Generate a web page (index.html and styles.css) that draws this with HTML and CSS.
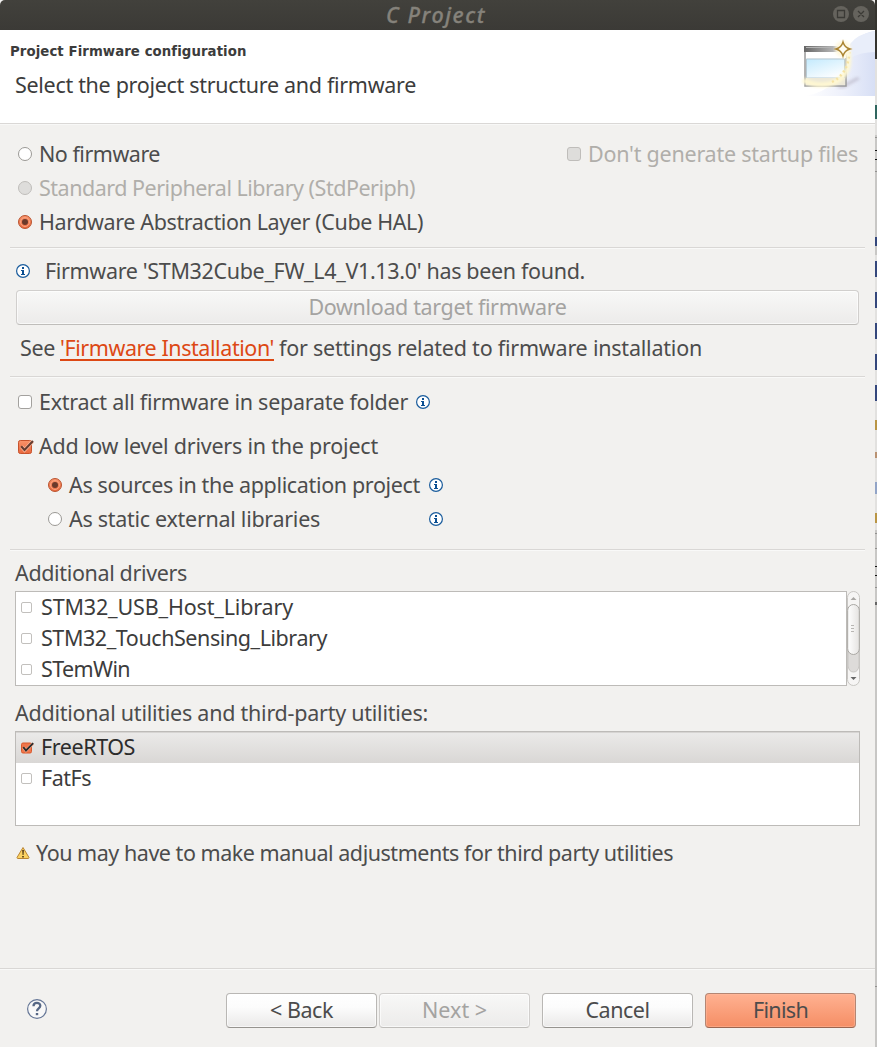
FILE: index.html
```html
<!DOCTYPE html>
<html lang="en">
<head>
<meta charset="utf-8">
<title>C Project</title>
<link rel="stylesheet" href="styles.css">
</head>
<body>
<svg class="defs" width="0" height="0">
  <defs>
    <linearGradient id="orange" x2="0" y2="1"><stop stop-color="#f9936b"/><stop offset="1" stop-color="#e9683c"/></linearGradient>
    <symbol id="info" viewBox="0 0 14 14"><circle cx="7" cy="7" r="6.4" fill="#fff" stroke="#1a5c9c" stroke-width="1.2"/><path d="M6 3h2v2H6zM5 6h3v4h1v1H5v-1h1V7H5z" fill="#0b4f92"/></symbol>
    <symbol id="on" viewBox="0 0 14 14"><circle cx="7" cy="7" r="6.5" fill="url(#orange)" stroke="#b95532"/><circle cx="7" cy="7" r="4.5" fill="none" stroke="#f9a482"/><circle cx="7" cy="7" r="3" fill="#6b3a2b"/></symbol>
    <symbol id="off" viewBox="0 0 14 14"><circle cx="7" cy="7" r="6.5" fill="#fff" stroke="#9a9894"/></symbol>
    <symbol id="check" viewBox="0 0 17 15"><rect x="1.5" y="1.5" width="13" height="13" rx="1.8" fill="url(#orange)" stroke="#c7532d"/><path d="M4.500 7.500 7.500 11 15.500 2.500" fill="none" stroke="#fbb598" stroke-width="3.6"/><path d="M4.200 7.200 7.500 11 16 2" fill="none" stroke="#663c30" stroke-width="2.1"/></symbol>
    <symbol id="check-dark" viewBox="0 0 13 12"><rect x=".5" y="1" width="10" height="10" rx="1.5" fill="#f0764b" stroke="#d9582c"/><path d="M2.500 5.500 5 8.500 12 1.500" fill="none" stroke="#fbb598" stroke-width="3"/><path d="M2.300 5.200 5 8.500 12.200 1.200" fill="none" stroke="#2c2c2c" stroke-width="1.900"/></symbol>
  </defs>
</svg>
<div class="screen">
  <div class="dialog">
    <header class="titlebar">
      <span class="title" data-w="100">C Project</span>
      <svg class="controls" width="38" height="18" viewBox="0 0 38 18"><g fill="#65635d"><circle cx="9" cy="9" r="8"/><circle cx="29" cy="9" r="8"/></g><path d="M5.5 5.5h7v7h-7zM26 6l6 6m0-6-6 6" fill="none" stroke="#3b3a36" stroke-width="1.3"/></svg>
    </header>
    <section class="banner">
      <div class="banner-text">
        <h1><span data-w="236">Project Firmware configuration</span></h1>
        <p><span data-w="401">Select the project structure and firmware</span></p>
      </div>
      <svg class="wizard" width="75" height="66" viewBox="0 0 75 66">
        <defs>
          <linearGradient id="sweep"><stop offset="0" stop-color="#fff"/><stop offset=".55" stop-color="#edf0fb"/><stop offset="1" stop-color="#d7dff5"/></linearGradient>
          <linearGradient id="bar"><stop offset="0" stop-color="#666"/><stop offset="1" stop-color="#d8d8d8"/></linearGradient>
          <linearGradient id="pane" x2=".6" y2="1"><stop offset="0" stop-color="#c3eafd"/><stop offset="1" stop-color="#fbfdff"/></linearGradient>
          <filter id="soft"><feGaussianBlur stdDeviation="1.5"/></filter>
        </defs>
        <path d="M5 66Q42 60 48 22Q55 4 75 1V66H5z" fill="url(#sweep)"/>
        <path d="M50 28Q61 22 75 22V1Q57 4 50 14z" fill="#e9eefa"/>
        <path d="M36 58 57 47 60 49 44 58z" fill="#bcb9ca" filter="url(#soft)" opacity=".7"/>
        <path d="M5 17h41v39H5z" fill="#f4f4f5" stroke="#9a9a9a" stroke-width="1.5"/>
        <path d="M4 16h43v6H4z" fill="url(#bar)"/><path d="M6 17.5h35" stroke="#b4b4b4"/>
        <path d="M6 22h40v6H6z" fill="#fff"/>
        <path d="M6.500 29h38v19h-38z" fill="url(#pane)" stroke="#a9bfca" stroke-width=".8"/>
        <path d="M6 48h39v7H6z" fill="#ece8d8"/>
        <path d="M3 50C15 57 32 56 40 49C48 43 50 34 48 22" fill="none" stroke="#fff8d2" stroke-width="5" filter="url(#soft)"/>
        <path d="M32 52Q48 44 49.500 22" fill="none" stroke="#f6e3a4" stroke-width="2.500" stroke-dasharray="2 3"/>
        <circle cx="43" cy="19" r="8" fill="#fff8de" filter="url(#soft)"/>
        <path d="M43 12Q44.500 17.500 50 19Q44.500 20.500 43 26Q41.500 20.500 36 19Q41.500 17.500 43 12z" fill="#fffdf3" stroke="#ab8432" stroke-width="1.400"/>
      </svg>
    </section>
    <main class="content">
      <div class="row r34">
        <svg class="radio"><use href="#off"/></svg><span data-w="121">No firmware</span>
        <i class="box disabled startup"></i><span class="muted" data-w="270">Don't generate startup files</span>
      </div>
      <div class="row r34 muted"><i class="box round disabled"></i><span data-w="376">Standard Peripheral Library (StdPeriph)</span></div>
      <div class="row r34"><svg class="radio"><use href="#on"/></svg><span data-w="384">Hardware Abstraction Layer (Cube HAL)</span></div>
      <hr class="gap8">
      <div class="row found"><svg class="info"><use href="#info"/></svg><span data-w="540">Firmware 'STM32Cube_FW_L4_V1.13.0' has been found.</span></div>
      <button class="btn wide" disabled><span data-w="258">Download target firmware</span></button>
      <div class="row see"><span data-w="35">See</span><a href="#" data-w="214">'Firmware Installation'</a><span data-w="423">for settings related to firmware installation</span></div>
      <hr class="gap5">
      <div class="row r48"><i class="box"></i><span data-w="369">Extract all firmware in separate folder</span><svg class="info after"><use href="#info"/></svg></div>
      <div class="row r40"><svg class="check"><use href="#check"/></svg><span data-w="339">Add low level drivers in the project</span></div>
      <div class="row r38 sub"><svg class="radio"><use href="#on"/></svg><span class="choice"><span data-w="351">As sources in the application project</span></span><svg class="info"><use href="#info"/></svg></div>
      <div class="row r30 sub"><svg class="radio"><use href="#off"/></svg><span class="choice"><span data-w="251">As static external libraries</span></span><svg class="info"><use href="#info"/></svg></div>
      <hr class="gap15">
      <div class="label drivers"><span data-w="172">Additional drivers</span></div>
      <div class="listing">
        <ul class="list">
          <li><i class="box small"></i><span data-w="252">STM32_USB_Host_Library</span></li>
          <li><i class="box small"></i><span data-w="286">STM32_TouchSensing_Library</span></li>
          <li><i class="box small"></i><span data-w="89">STemWin</span></li>
        </ul>
        <svg class="scroll" width="13" height="95" viewBox="0 0 13 95">
          <defs><linearGradient id="thumb"><stop stop-color="#fff"/><stop offset="1" stop-color="#e5e3e1"/></linearGradient></defs>
          <rect x=".5" y=".5" width="12" height="94" rx="6" fill="#f6f5f4" stroke="#c8c6c3"/>
          <path d="M1 50h11v25q-1 6-5.500 6T1 75z" fill="#dddbd9" stroke="#c8c6c3"/>
          <rect x=".7" y="13.500" width="11.600" height="50" rx="5.800" fill="url(#thumb)" stroke="#aaa8a4"/>
          <path d="M4 34.500h3M4 37.500h3M4 40.500h3" stroke="#b8b6b3"/>
          <path d="M3.500 9 6.500 6 9.500 9z" fill="#aaa8a5"/><path d="M3.500 86h6l-3 3z" fill="#666"/>
        </svg>
      </div>
      <div class="label utilities"><span data-w="413">Additional utilities and third-party utilities:</span></div>
      <ul class="list">
        <li class="selected"><svg class="check small"><use href="#check-dark"/></svg><span data-w="94">FreeRTOS</span></li>
        <li><i class="box small"></i><span data-w="50">FatFs</span></li>
      </ul>
      <div class="row warn">
        <svg width="14" height="14" viewBox="0 0 14 14"><path d="M7 1.500 13 11.500Q13 12.500 12 12.500H2Q1 12.500 1 11.500z" fill="#fbd263" stroke="#b98432" stroke-linejoin="round"/><path d="M6.200 4h1.700L7.500 9h-.9zM6.200 10h1.600v1.500H6.200z" fill="#4c3412"/></svg>
        <span data-w="637">You may have to make manual adjustments for third party utilities</span>
      </div>
    </main>
    <footer class="footer">
      <svg class="help" width="22" height="22" viewBox="0 0 22 22"><circle cx="11" cy="11" r="9.400" fill="#f8f8f8" stroke="#667797" stroke-width="1.200"/><path d="M7.500 8.200C7.500 3.700 14.300 4 14.300 7.800C14.300 10.500 11 10.300 11 13.300" fill="none" stroke="#566785" stroke-width="2.300"/><path d="M9.800 15h2.400v2.200H9.800z" fill="#566785"/></svg>
      <div class="pair">
        <button class="btn"><span data-w="63">&lt; Back</span></button>
        <button class="btn" disabled><span data-w="65">Next &gt;</span></button>
      </div>
      <button class="btn"><span data-w="64">Cancel</span></button>
      <button class="btn primary"><span data-w="55">Finish</span></button>
    </footer>
  </div>
  <svg class="behind" width="2" height="1047" viewBox="0 0 2 1047">
    <path d="M0 0h2v1047H0z" fill="#c8c7c5"/><path d="M0 0h2v59H0z" fill="#35342f"/><path d="M0 59h2v76H0zM0 255h2v275H0z" fill="#e2e1df"/>
    <path d="M0 237h2v9H0zM0 261h2v16H0zM0 292h2v16H0zM0 323h2v16H0zM0 354h2v16H0zM0 385h2v16H0z" fill="#34477c"/>
    <path d="M0 105h2v14H0z" fill="#2f665f"/><path d="M0 150h2v1H0zM0 159h2v1H0zM0 566h2v1H0zM0 575h2v1H0z" fill="#111"/>
    <path d="M0 137h2v1H0zM0 171h2v1H0zM0 533h2v1H0zM0 548h2v1H0zM0 587h2v1H0zM0 986h2v1H0z" fill="#92918f"/>
    <path d="M0 420h2v10H0zM0 513h2v10H0z" fill="#b99544"/><path d="M0 452h2v6H0z" fill="#b99272"/><path d="M0 482h2v12H0z" fill="#92a4c7"/><path d="M0 602h2v3H0z" fill="#666"/>
  </svg>
</div>
<script src="fit.js"></script>
</body>
</html>
```
FILE: styles.css
```css
* { box-sizing: border-box; }
body { margin: 0; font: 21.5px/30px "Noto Sans", "Open Sans", sans-serif; color: #4c4c4c; }
.defs { position: absolute; }
.screen { display: flex; width: 877px; height: 1047px; overflow: hidden; }
.dialog { width: 875px; display: flex; flex-direction: column; background: #f2f1ef; }
.behind, svg { flex: none; display: block; }
[data-w] { white-space: pre; display: inline-block; flex: none; }
.titlebar { height: 30px; display: flex; align-items: center; justify-content: flex-end; background: linear-gradient(#42413c, #3b3a36); border-radius: 5px 5px 0 0; padding-right: 5px; }
.title { font-style: italic; font-size: 21.5px; line-height: 30px; font-weight: 500; color: #85827b; margin: 0 346px 0 0; -webkit-text-stroke: .3px #85827b; }
.controls { margin-top: -2px; }
.banner { height: 95px; display: flex; justify-content: space-between; background: #fff; border-bottom: 1px solid #f8f8f7; box-shadow: inset 0 -1px #dad8d6; }
h1 { margin: 12px 0 0 10px; font: bold 13.3px/20px "DejaVu Sans", sans-serif; color: #3c3c3c; }
p { margin: 8px 0 0 15px; color: #3c3c3c; }
.content { flex: 1; padding: 12px 15px 0; }
.row { display: flex; align-items: center; padding-left: 2px; }
.muted { color: #b0aeaa; }
.r34 { height: 34px; }
.r48 { height: 48px; }
.r40 { height: 40px; }
.r38 { height: 38px; }
.r30 { height: 30px; }
.sub { padding-left: 32px; }
hr { border: 0; height: 2px; margin: 0 -5px; background: linear-gradient(#d9d7d5 50%, #f9f9f8 50%); }
.gap8 { margin-top: 8px; }
.gap5 { margin-top: 5px; }
.gap15 { margin-top: 15px; }
.radio { width: 14px; height: 14px; margin: 0 7px 0 1px; }
.box { flex: none; width: 14px; height: 14px; margin: 0 7px 0 1px; background: #fff; border: 1px solid #a3a19e; border-radius: 3px; }
.box.round { border-radius: 50%; }
.box.disabled { background: #dedddb; border-color: #bfbdba; }
.startup { margin-left: auto; }
.row .startup + span { margin-right: 2px; }
.info { width: 14px; height: 14px; }
.info.after { margin-left: 8px; }
.choice { width: 360px; }
.found { height: 41px; padding: 3px 0 0 1px; }
.found .info { margin-right: 15px; }
.see { height: 46px; padding-left: 5px; gap: 5px; }
.see a { color: #dd4814; text-decoration: none; height: 26px; line-height: 26px; border-bottom: 2px solid #dd4814; }
.check { width: 17px; height: 15px; margin-right: 5px; }
.check.small { width: 13px; height: 12px; margin: 0 7px 0 0; }
.label { padding-top: 7px; }
.drivers { height: 40px; }
.utilities { height: 45px; padding-top: 12px; }
.listing { display: flex; }
.list { flex: 1; list-style: none; margin: 0; padding: 0; height: 95px; background: #fff; border: 1px solid #bdbbb8; color: #3c3c3c; }
.list li { height: 31px; display: flex; align-items: center; padding-left: 5px; }
.list li span { line-height: 28px; padding-bottom: 2px; }
.box.small { width: 11px; height: 11px; margin: 0 9px 0 0; border-color: #c2c0bd; border-radius: 2px; }
.selected { background: linear-gradient(#ebeae9, #d9d7d5); box-shadow: inset 0 1px #d6d4d2; color: #2c2c2c; }
.warn { height: 54px; padding-left: 1px; gap: 6px; }
.btn { font: inherit; color: #4c4c4c; width: 151px; height: 35px; padding: 0 0 2px 0; border: 1px solid #b9b7b4; border-bottom-color: #96948f; border-radius: 4px; background: linear-gradient(#fff, #fcfcfc 40%, #eae9e8); box-shadow: inset 0 0 0 1px #ffffffa0; line-height: 31px; }
.btn:disabled { color: #a4a3a1; border-color: #d1cfcd; border-bottom-color: #bfbdba; background: linear-gradient(#f8f8f7, #ecebea); }
.btn.wide { display: block; width: 843px; margin-left: 1px; }
.btn.primary { background: linear-gradient(#ffb191, #f58e65); border-color: #b48673; border-bottom-color: #9b654f; box-shadow: inset 0 0 0 1px #ffb99d80; }
.footer { height: 79px; display: flex; gap: 12px; padding: 25px 19px 0 26px; background: linear-gradient(#d9d7d5 1px, #f9f9f8 1px, #f9f9f8 2px, transparent 2px); }
.help { margin: 5px auto 0 0; }
.pair { display: flex; gap: 2px; }
```
FILE: fit.js
```js
// Track each label so it occupies its declared width.
document.querySelectorAll("[data-w]").forEach(function (el) {
  var target = Number(el.dataset.w);
  var count = el.textContent.length;
  var natural = el.getBoundingClientRect().width;
  el.style.letterSpacing = (target - natural) / count + "px";
});
```
